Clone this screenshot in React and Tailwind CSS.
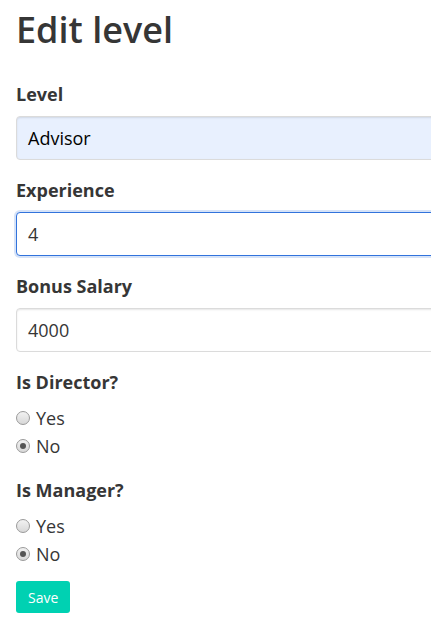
import { useState } from 'react';

const FONT = { fontFamily: '"Open Sans", "Noto Sans", sans-serif' };

function Field({ label, value, focused }) {
  return (
    <div className="mt-[18px]">
      <label className="block text-[18px] font-bold leading-[24px] text-[#363636]">{label}</label>
      <div
        className={
          'mt-[10px] h-[44px] w-[600px] rounded-[4px] border flex items-center px-[11px] text-[18px] ' +
          (focused
            ? 'border-[#3273dc] shadow-[0_0_0_2px_rgba(50,115,220,0.2)] bg-white text-[#363636]'
            : 'border-[#dbdbdb] bg-white text-[#363636] shadow-[inset_0_1px_2px_rgba(10,10,10,0.1)]')
        }
      >
        {value}
      </div>
    </div>
  );
}

function Radio({ checked, label }) {
  return (
    <div className="flex items-center h-[28px] text-[18px] text-[#363636]">
      <span className="w-[14px] h-[14px] rounded-full border border-[#9a9a9a] bg-gradient-to-b from-[#f2f2f2] to-[#d8d8d8] flex items-center justify-center">
        {checked && <span className="w-[6px] h-[6px] rounded-full bg-[#555]" />}
      </span>
      <span className="ml-[6px]">{label}</span>
    </div>
  );
}

export default function App() {
  const [director] = useState(false);
  const [manager] = useState(false);

  return (
    <div className="w-screen h-[635px] overflow-hidden bg-white px-[16px]" style={FONT}>
      <h1 className="pt-[4px] text-[36px] font-semibold leading-[52px] text-[#363636]">Edit level</h1>

      <div className="mt-[26px]">
        <label className="block text-[18px] font-bold leading-[24px] text-[#363636]">Level</label>
        <div className="mt-[10px] h-[44px] w-[600px] rounded-[4px] border border-[#dbdbdb] bg-[#e8f0fe] flex items-center px-[11px] text-[18px] text-black shadow-[inset_0_1px_2px_rgba(10,10,10,0.1)]">
          Advisor
        </div>
      </div>

      <Field label="Experience" value="4" focused />
      <Field label="Bonus Salary" value="4000" />

      <div className="mt-[18px]">
        <label className="block text-[18px] font-bold leading-[24px] text-[#363636]">Is Director?</label>
        <div className="mt-[10px]">
          <Radio label="Yes" checked={director} />
          <Radio label="No" checked={!director} />
        </div>
      </div>

      <div className="mt-[18px]">
        <label className="block text-[18px] font-bold leading-[24px] text-[#363636]">Is Manager?</label>
        <div className="mt-[10px]">
          <Radio label="Yes" checked={manager} />
          <Radio label="No" checked={!manager} />
        </div>
      </div>

      <button className="mt-[13px] h-[32px] px-[12px] rounded-[3px] bg-[#00d1b2] text-white text-[14px]">
        Save
      </button>
    </div>
  );
}
